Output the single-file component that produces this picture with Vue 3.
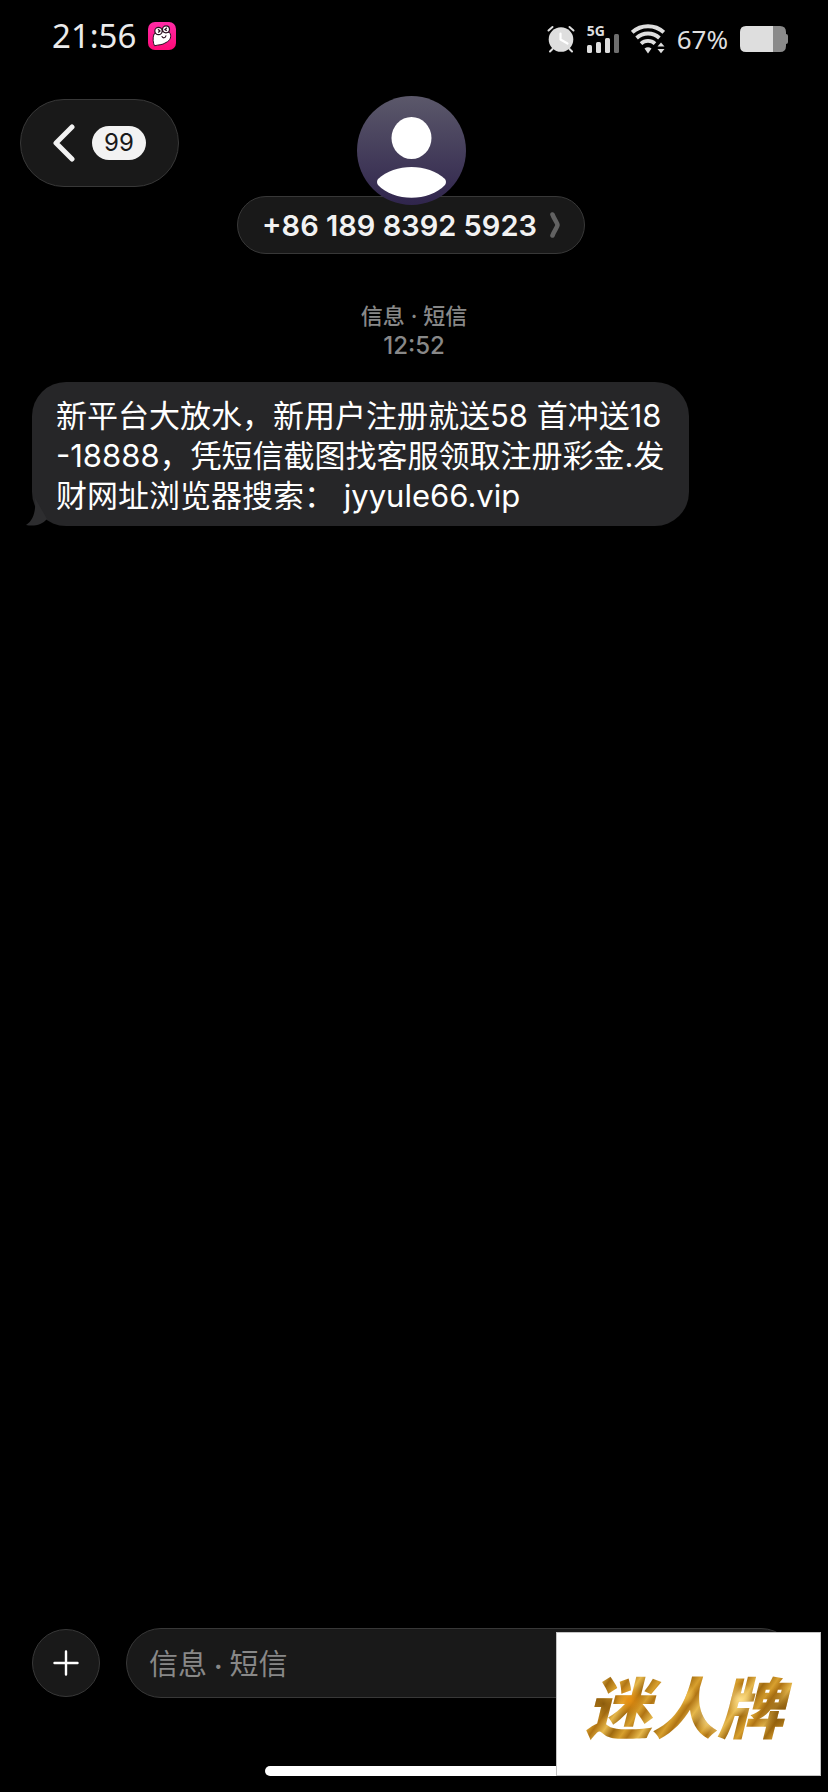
<script setup>
import { ref } from 'vue'

const draft = ref('')
const unread = 99
const contact = '+86 189 8392 5923'
const messages = [
  {
    id: 1,
    lines: [
      '新平台大放水，新用户注册就送58 首冲送18',
      '-18888，凭短信截图找客服领取注册彩金.发',
      '财网址浏览器搜索： jyyule66.vip',
    ],
  },
]
</script>

<template>
  <div class="screen">
    <div class="status">
      <div class="status-left">
        <span class="clock">21:56</span>
        <svg class="app-badge" viewBox="0 0 28 28" aria-hidden="true">
          <defs>
            <linearGradient id="pink" x1="0" y1="0" x2="0" y2="1">
              <stop offset="0" stop-color="#ff2ba6" />
              <stop offset="1" stop-color="#ff0a78" />
            </linearGradient>
          </defs>
          <rect width="28" height="28" rx="7" fill="url(#pink)" />
          <path d="M6 12C4.500 16 5 21 6.500 23.800C10 22.500 14 23.500 18 20.500C22.500 18.500 24 14 21.500 10.500L14 9Z" fill="#fff" stroke="#2a1020" stroke-width="1" stroke-linejoin="round" />
          <circle cx="10.500" cy="9" r="3.700" fill="#fff" stroke="#2a1020" stroke-width="1.200" />
          <circle cx="18" cy="7.300" r="3.500" fill="#fff" stroke="#2a1020" stroke-width="1.200" />
          <path d="M10 7.200l2 1.800l-1.800 1.500M18.800 5.800l-1.800 1.800l1.800 1.200" fill="none" stroke="#2a1020" stroke-width="1.300" />
          <path d="M14 14.500c1 2 3.500 1.800 4-.8" fill="none" stroke="#2a1020" stroke-width="1.100" stroke-linecap="round" />
        </svg>
      </div>
      <div class="status-right">
        <svg class="alarm" viewBox="0 0 28 28" aria-hidden="true">
          <circle cx="14" cy="14.500" r="12.300" fill="#dedede" />
          <path d="M1.500 5.500L5.500 2M26.500 5.500L22.500 2M5.500 24L3 26.500M22.500 24L25 26.500" stroke="#dedede" stroke-width="2" stroke-linecap="round" />
          <path d="M13.500 8.500v6l7 4" fill="none" stroke="#fff" stroke-width="2.200" stroke-linecap="round" stroke-linejoin="round" />
        </svg>
        <div class="signal">
          <span class="signal-label">5G</span>
          <svg viewBox="0 0 32 20" aria-hidden="true">
            <rect x="0" y="12" width="5" height="8" rx="1.500" fill="#dedede" />
            <rect x="9" y="9" width="5" height="11" rx="1.500" fill="#dedede" />
            <rect x="18" y="5" width="5" height="15" rx="1.500" fill="#dedede" />
            <rect x="27" y="1" width="5" height="19" rx="1.500" fill="#6e6e6e" />
          </svg>
        </div>
        <svg class="wifi" viewBox="0 0 34 30" aria-hidden="true">
          <g fill="none" stroke="#dedede" stroke-width="3.800">
            <path d="M1.200 8.300C10 .2 24 .2 32.800 8.300" />
            <path d="M5.600 14C12 8 22 8 28.400 14" />
            <path d="M10 19.600C14 16 20 16 24 19.600" />
          </g>
          <path d="M13.500 24.500Q17 22 20.500 24.500L17 29.500Z" fill="#dedede" />
          <path d="M26.500 22.500L30 18.500L33.500 22.500ZM26.500 25L30 29.200L33.500 25Z" fill="#dedede" />
        </svg>
        <span class="percent">67%</span>
        <svg class="battery" viewBox="0 0 48 26" aria-hidden="true">
          <path d="M33 0h7q6 0 6 6v2q2 0 2 2v6q0 2-2 2v2q0 6-6 6h-7z" fill="#8a8a8a" />
          <path d="M6 0h27v26H6q-6 0-6-6V6q0-6 6-6z" fill="#dedede" />
        </svg>
      </div>
    </div>

    <header class="header">
      <button class="back" type="button" aria-label="返回">
        <svg viewBox="0 0 22 38" aria-hidden="true">
          <path d="M19 3L3 19L19 35" fill="none" stroke="#f2f2f2" stroke-width="5" stroke-linecap="round" stroke-linejoin="round" />
        </svg>
        <span class="unread">{{ unread }}</span>
      </button>
      <div class="contact">
        <svg class="avatar" viewBox="0 0 109 109" aria-hidden="true">
          <defs>
            <linearGradient id="dusk" x1="0" y1="0" x2="0" y2="1">
              <stop offset="0" stop-color="#5b586a" />
              <stop offset="1" stop-color="#30254d" />
            </linearGradient>
          </defs>
          <circle cx="54.500" cy="54.500" r="54.500" fill="url(#dusk)" />
          <ellipse cx="54.500" cy="42" rx="20" ry="21" fill="#fff" />
          <path d="M21 83C38 67 71 67 88 83Q90 86 88 89C72 106 37 106 21 89Q19 86 21 83Z" fill="#fff" />
        </svg>
        <button class="name" type="button">
          <span>{{ contact }}</span>
          <svg viewBox="0 0 10 26" aria-hidden="true">
            <path d="M2.500 2.500C4 7 7.500 11 7.500 13S4 19 2.500 23.500" fill="none" stroke="#626262" stroke-width="4.600" stroke-linecap="round" />
          </svg>
        </button>
      </div>
    </header>

    <main class="thread">
      <div class="stamp">
        <span>信息 · 短信</span>
        <time>12:52</time>
      </div>
      <div v-for="m in messages" :key="m.id" class="bubble">
        <svg class="tail" viewBox="0 0 24 28" aria-hidden="true">
          <path d="M9 0C10 12 8 22 0 27C8 28.500 16 27 21 21Z" fill="#2d2d2f" />
        </svg>
        <p>
          <span v-for="line in m.lines" :key="line" class="line">{{ line }}</span>
        </p>
      </div>
    </main>

    <form class="composer" @submit.prevent>
      <button class="add" type="button" aria-label="添加">
        <svg viewBox="0 0 26 26" aria-hidden="true">
          <path d="M13 1.500v23M1.500 13h23" stroke="#fff" stroke-width="2.400" stroke-linecap="round" />
        </svg>
      </button>
      <input v-model="draft" class="field" type="text" placeholder="信息 · 短信" aria-label="信息 · 短信" />
    </form>
    <div class="home-bar"></div>

    <div class="watermark"><span>迷人牌</span></div>
  </div>
</template>

<style>
body {
  background: #000;
}
</style>

<style scoped>
.screen {
  position: relative;
  box-sizing: border-box;
  min-height: 100vh;
  display: flex;
  flex-direction: column;
  background: #000;
  color: #f2f2f2;
  font-family: Inter, "Noto Sans CJK SC", sans-serif;
}
svg {
  display: block;
  flex: none;
}
button {
  box-sizing: border-box;
  margin: 0;
  font: inherit;
  color: inherit;
  background: #191919;
  border: 1px solid #383838;
  display: flex;
  align-items: center;
}

.status {
  display: flex;
  justify-content: space-between;
  align-items: center;
  height: 78px;
  padding: 0 40px 0 52px;
  font-family: "Noto Sans", sans-serif;
}
.status-left {
  display: flex;
  align-items: center;
  gap: 12px;
  padding-bottom: 6px;
}
.clock {
  font-size: 33px;
  line-height: 40px;
  color: #ebebeb;
}
.app-badge {
  width: 28px;
  height: 28px;
}
.status-right {
  display: flex;
  align-items: center;
  gap: 12px;
  color: #dedede;
}
.alarm {
  width: 28px;
  height: 28px;
}
.signal {
  position: relative;
  height: 28px;
  display: flex;
  align-items: flex-end;
}
.signal svg {
  width: 32px;
  height: 20px;
}
.signal-label {
  position: absolute;
  left: 0;
  top: -2px;
  font-size: 14px;
  line-height: 16px;
  font-weight: 700;
}
.wifi {
  width: 34px;
  height: 30px;
}
.percent {
  font-size: 26px;
  line-height: 32px;
}
.battery {
  width: 48px;
  height: 26px;
}

.header {
  position: relative;
  padding: 18px 6px 0 0;
}
.back {
  position: absolute;
  left: 20px;
  top: 21px;
  height: 88px;
  padding: 0 32px;
  gap: 17px;
  border-radius: 44px;
}
.back svg {
  width: 22px;
  height: 38px;
}
.unread {
  padding: 0 12px;
  border-radius: 17px;
  background: #f2f2f2;
  color: #191919;
  font-size: 24px;
  line-height: 34px;
}
.contact {
  display: flex;
  flex-direction: column;
  align-items: center;
}
.avatar {
  position: relative;
  z-index: 1;
  width: 109px;
  height: 109px;
  margin-bottom: -9px;
}
.name {
  height: 58px;
  padding: 0 24px;
  gap: 13px;
  border-radius: 29px;
  font-size: 29px;
  font-weight: 600;
}
.name svg {
  width: 10px;
  height: 26px;
}

.thread {
  flex: 1;
  display: flex;
  flex-direction: column;
  align-items: flex-start;
  gap: 21px;
  padding: 47px 32px;
}
.stamp {
  align-self: center;
  display: flex;
  flex-direction: column;
  align-items: center;
  color: #888;
  font-size: 22px;
  line-height: 30px;
  font-weight: 500;
}
.stamp time {
  font-size: 24px;
}
.bubble {
  position: relative;
  padding: 14px 24px 10px;
  border-radius: 34px;
  background: #262628;
  color: #fff;
}
.bubble p {
  position: relative;
  margin: 0;
  font-size: 31px;
  line-height: 40px;
}
.line {
  display: block;
}
.tail {
  position: absolute;
  left: -6px;
  bottom: 0;
  width: 24px;
  height: 28px;
}

.composer {
  display: flex;
  align-items: center;
  gap: 26px;
  padding: 0 32px;
}
.add {
  flex: none;
  justify-content: center;
  width: 68px;
  height: 68px;
  padding: 0;
  border-radius: 50%;
}
.add svg {
  width: 26px;
  height: 26px;
}
.field {
  box-sizing: border-box;
  flex: 1;
  min-width: 0;
  height: 70px;
  padding: 0 22px;
  border: 1px solid #383838;
  border-radius: 35px;
  outline: none;
  background: #191919;
  color: #f2f2f2;
  font-family: Lato, "Noto Sans CJK SC", sans-serif;
  font-size: 29px;
}
.field::placeholder {
  color: #888;
  opacity: 1;
}
.home-bar {
  align-self: center;
  width: 36%;
  height: 10px;
  margin: 68px 0 16px;
  border-radius: 5px;
  background: #fff;
}

.watermark {
  position: absolute;
  right: 7px;
  bottom: 16px;
  box-sizing: border-box;
  width: 265px;
  height: 144px;
  display: flex;
  align-items: center;
  justify-content: center;
  background: #fff;
  border: 1px solid #c4c4c4;
}
.watermark span {
  padding: 0 12px 0 4px;
  font-family: "Noto Sans CJK SC", sans-serif;
  font-size: 66px;
  line-height: 80px;
  font-weight: 900;
  font-style: italic;
  color: transparent;
  background:
    radial-gradient(circle at 48% 38%, #f0c050 0, transparent 9%),
    radial-gradient(circle at 60% 68%, #f8dc8c 0, transparent 12%),
    radial-gradient(circle at 74% 45%, #ffe08a 0, transparent 10%),
    radial-gradient(circle at 22% 45%, #e88f10 0, transparent 9%),
    radial-gradient(circle at 93% 60%, #8a5a0c 0, transparent 12%),
    radial-gradient(circle at 10% 50%, #8a5a0c 0, transparent 8%),
    repeating-linear-gradient(125deg, #a06a10 0, #d8a02e 9px, #b07414 15px, #e6b84c 24px, #a06a10 32px);
  background-clip: text;
  -webkit-background-clip: text;
}
</style>
